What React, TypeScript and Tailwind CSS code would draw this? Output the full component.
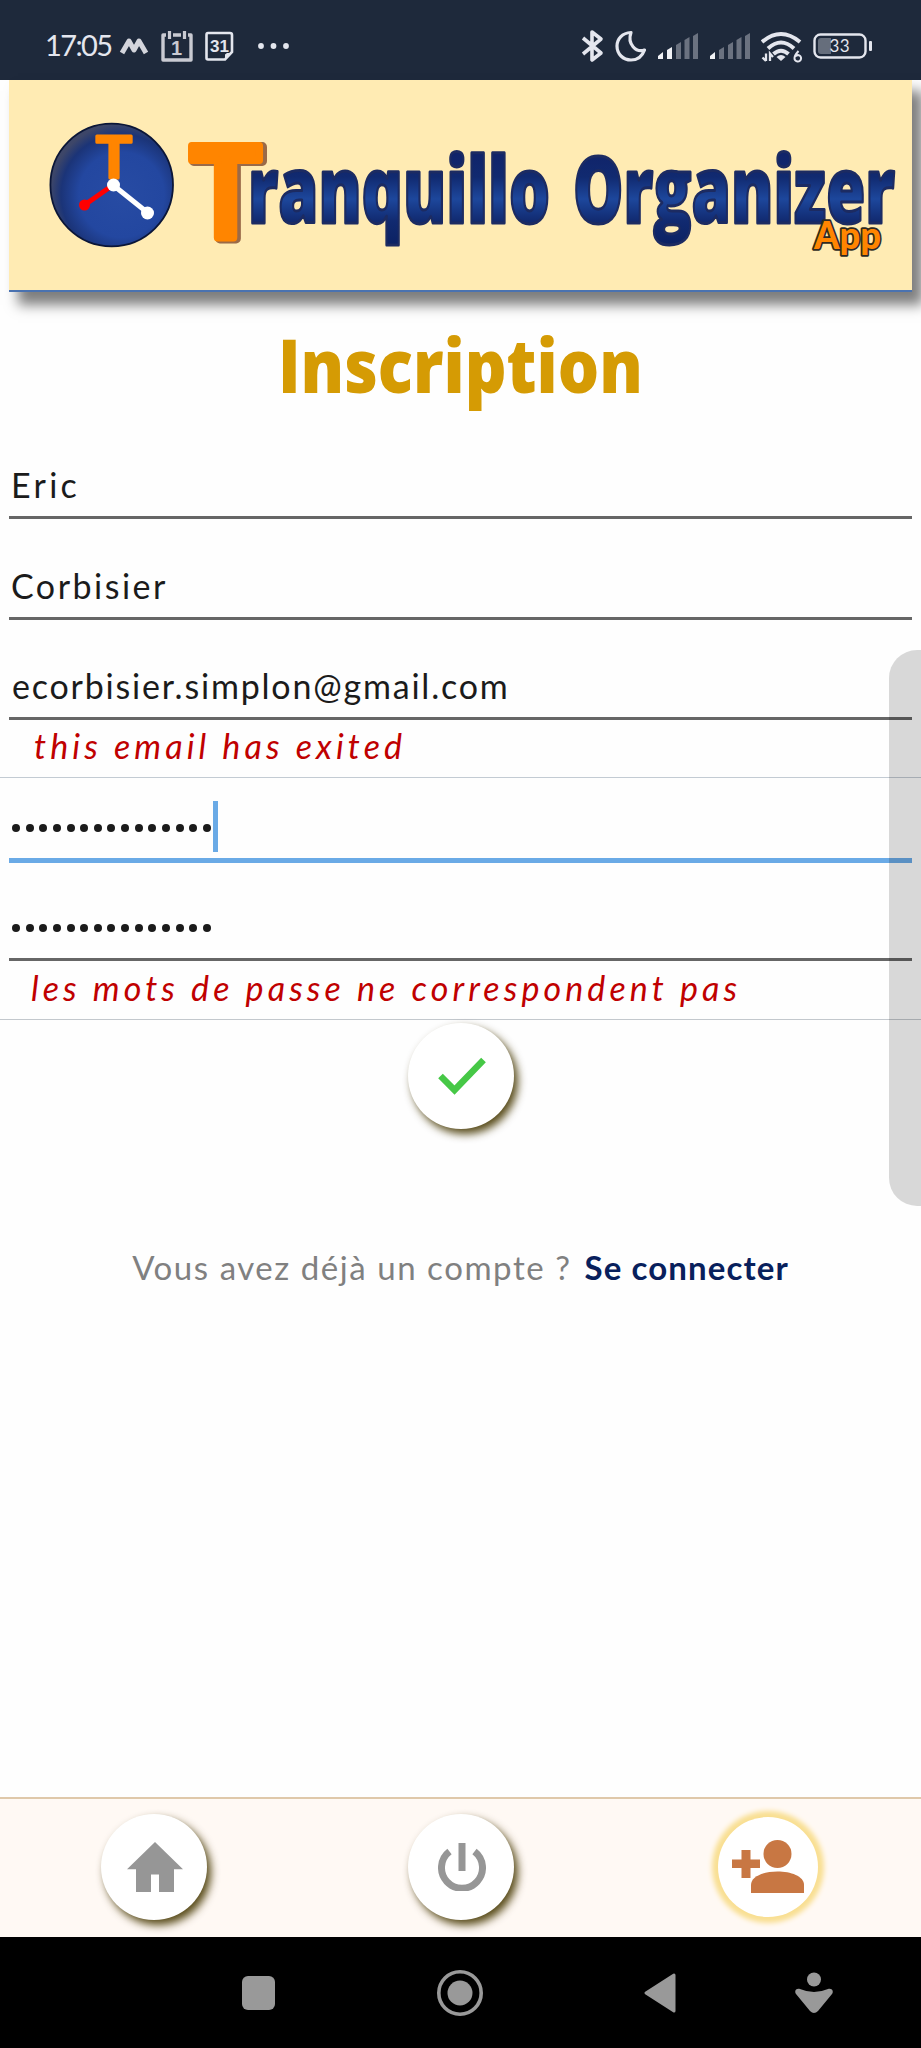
import React from "react";

function StatusBar() {
  return (
    <header className="flex h-[80px] shrink-0 items-start bg-[#1e293b] text-[#e4e6ee]">
      <span className="ml-[45px] mt-[30px] w-[70px] whitespace-nowrap text-[29px] font-normal leading-none tracking-[-1.6px]">17:05</span>
      <svg className="ml-[4px] mt-[36px]" width="30" height="20" viewBox="0 0 30 20" fill="none" stroke="#d4d5dc" strokeWidth="5" strokeLinejoin="round">
        <path d="M3 17 L10 5 L15 14 L20 5 L27 17" />
      </svg>
      <svg className="ml-[12px] mt-[30px]" width="32" height="33" viewBox="0 0 32 33">
        <path d="M5 5 H2 V30 H30 V5 H27 M12 5 H20" fill="none" stroke="#c9cad2" strokeWidth="3.400" strokeLinejoin="round" />
        <path d="M8.500 1 V9 M23.500 1 V9" stroke="#c9cad2" strokeWidth="3.200" />
        <text x="15.500" y="25" textAnchor="middle" fontSize="20" fontWeight="700" fill="#c9cad2" fontFamily="Liberation Sans, sans-serif">1</text>
      </svg>
      <svg className="ml-[12px] mt-[31px]" width="30" height="31" viewBox="0 0 30 31">
        <path d="M3 2 H25 Q27 2 27 4 V21 L20 28.500 H3 Q1.500 28.500 1.500 27 V4 Q1.500 2 3 2 Z" fill="none" stroke="#e4e6ee" strokeWidth="2.600" />
        <path d="M20 28 V23.500 L22 22 H27 Z" fill="#e4e6ee" />
        <text x="14.500" y="20.500" textAnchor="middle" fontSize="17" fontWeight="700" fill="#e4e6ee" fontFamily="Liberation Sans, sans-serif">31</text>
      </svg>
      <svg className="ml-[23px] mt-[42px]" width="32" height="8" viewBox="0 0 32 8" fill="#e4e6ee">
        <circle cx="3" cy="4" r="2.900" /><circle cx="15.500" cy="4" r="2.900" /><circle cx="28" cy="4" r="2.900" />
      </svg>
      <svg className="ml-auto mt-[29px]" width="24" height="34" viewBox="0 0 24 34" fill="none" stroke="#e4e6ee" strokeWidth="3.600" strokeLinejoin="round">
        <path d="M2 9 L20 24 L11 31 V3 L20 10 L2 25" />
      </svg>
      <svg className="ml-[10px] mt-[30px]" width="32" height="33" viewBox="0 0 32 33" fill="none" stroke="#e4e6ee" strokeWidth="3.200" strokeLinejoin="round">
        <path d="M16 2.500 C7 3 2 9 2 16 C2 24 8 30 16 30 C22 30 27 27 29.500 20 C21 23 12 14 16 2.500 Z" />
      </svg>
      <Signal strong={2} />
      <Signal strong={1} />
      <svg className="ml-[10px] mt-[31px]" width="42" height="33" viewBox="0 0 42 33" fill="none" stroke="#e4e6ee" strokeWidth="4">
        <path d="M1 11 Q20 -5 39 11" />
        <path d="M7 17.500 Q20 5.500 33 17.500" />
        <path d="M12.500 23 Q20 16.500 27.500 23" />
        <path d="M15.500 26 Q20 22 24.500 26 L20 30 Z" fill="#e4e6ee" stroke="none" />
        <path d="M5 22.500 V30 M1.500 26.500 L5 30 M9 30 V22.500 L12 26" strokeWidth="2.300" />
        <path d="M37.500 20 C34 24 33.500 26 33.500 27 A3.300 3.300 0 1 0 37 24 L34.500 25" strokeWidth="2" />
      </svg>
      <svg className="ml-[9px] mr-[47px] mt-[32px]" width="62" height="28" viewBox="0 0 62 28">
        <rect x="2.500" y="2.500" width="51" height="23" rx="6" fill="none" stroke="#e4e6ee" strokeWidth="2.400" />
        <path d="M9 6 H19 V22 H9 Q6 22 6 19 V9 Q6 6 9 6" fill="#666e7c" />
        <rect x="57" y="9" width="3" height="10" rx="1" fill="#e4e6ee" />
        <text x="27.500" y="20" textAnchor="middle" fontSize="17" textLength="20" fill="#e4e6ee" fontFamily="Lato, sans-serif">33</text>
      </svg>
    </header>
  );
}

const bars = ["M1 27 V24 L6 20 V27 Z", "M10 27 V18 L15 15 V27 Z", "M19 27 V13 L24 10 V27 Z", "M27.500 27 V8 L32.500 5 V27 Z", "M36 27 V4 L41 1 V27 Z"];

function Signal({ strong }: { strong: number }) {
  return (
    <svg className="ml-[10px] mt-[32px]" width="42" height="29" viewBox="0 0 42 29">
      {bars.map((d, i) => (
        <path key={d} d={d} fill={i < strong ? "#f1f2f6" : "#6b7280"} />
      ))}
    </svg>
  );
}

function Banner() {
  return (
    <div className="mx-[9px] h-[212px] shrink-0 border-b-2 border-[#4a72b0] bg-[#ffebb3] shadow-[10px_12px_12px_1px_rgba(0,0,0,0.5)]">
      <svg width="903" height="210" viewBox="9 80 903 210" className="block overflow-visible">
        <defs>
          <radialGradient id="disc" cx="0.58" cy="0.58" r="0.58">
            <stop offset="0" stopColor="#274ba3" />
            <stop offset="0.600" stopColor="#2347a0" />
            <stop offset="0.850" stopColor="#1b3478" />
            <stop offset="1" stopColor="#3d4668" />
          </radialGradient>
          <linearGradient id="ink" gradientUnits="userSpaceOnUse" x1="0" y1="155" x2="0" y2="243">
            <stop offset="0" stopColor="#10246a" />
            <stop offset="0.250" stopColor="#112a70" />
            <stop offset="0.500" stopColor="#1d479c" />
            <stop offset="0.750" stopColor="#112a70" />
            <stop offset="1" stopColor="#0c2264" />
          </linearGradient>
        </defs>
        <circle cx="111.700" cy="185" r="61.300" fill="url(#disc)" stroke="#0b1638" strokeWidth="1.800" />
        <text x="96" y="178" fontSize="58" fontWeight="700" textLength="36" lengthAdjust="spacingAndGlyphs" fill="#ff8500" stroke="#ff8500" strokeWidth="3" strokeLinejoin="round" fontFamily="Lato, sans-serif">T</text>
        <path d="M113 185 L84.500 205" stroke="#f00" strokeWidth="5" />
        <circle cx="84.500" cy="205" r="5.500" fill="#f00" />
        <path d="M113 185 L148 213" stroke="#fff" strokeWidth="5" />
        <circle cx="113.500" cy="185" r="6.500" fill="#fff" />
        <circle cx="147.500" cy="213" r="6.500" fill="#fff" />
        <text x="192" y="239" fontSize="126" fontWeight="700" textLength="72" lengthAdjust="spacingAndGlyphs" fill="#b5632c" stroke="#9a6a48" strokeWidth="10" strokeLinejoin="round" fontFamily="Lato, sans-serif">T</text>
        <text x="190" y="238" fontSize="126" fontWeight="700" textLength="71" lengthAdjust="spacingAndGlyphs" fill="#ff8500" stroke="#ff8500" strokeWidth="8" strokeLinejoin="round" fontFamily="Lato, sans-serif">T</text>
        <g fontFamily="Open Sans, sans-serif" fontWeight="800" fontSize="92" fill="url(#ink)" stroke="#1c2b62" strokeWidth="3" strokeLinejoin="round">
          <text x="248" y="223" textLength="302" lengthAdjust="spacingAndGlyphs">ranquillo</text>
          <text x="573" y="223" textLength="322" lengthAdjust="spacingAndGlyphs">Organizer</text>
        </g>
        <text x="814" y="249" fontSize="38" fontWeight="900" textLength="67" lengthAdjust="spacingAndGlyphs" fill="#ff8500" stroke="#2e2a22" strokeWidth="3.500" paintOrder="stroke" strokeLinejoin="round" fontFamily="Lato, sans-serif">App</text>
      </svg>
    </div>
  );
}

function Dots() {
  return (
    <span className="flex gap-[5.65px]">
      {Array.from({ length: 15 }, (_, i) => (
        <span key={i} className="size-[8px] rounded-full bg-[#1b1b1b]" />
      ))}
    </span>
  );
}

const round = "flex size-[106px] items-center justify-center rounded-full bg-white shadow-[4px_5px_8px_0px_rgba(70,55,0,0.9)]";

export default function App() {
  return (
    <div className="relative flex h-[2048px] w-[921px] flex-col overflow-hidden bg-[#fefefe] font-[Lato,sans-serif] text-[#1b1b1b]">
      <StatusBar />
      <Banner />
      <h1 className="mt-[22px] flex h-[105px] shrink-0 justify-center whitespace-nowrap font-['Open_Sans',sans-serif] text-[74px] font-extrabold leading-[101px] text-[#d59b04]">
        <span className="scale-x-[0.88]">Inscription</span>
      </h1>
      <main className="flex grow flex-col">
        <div className="mx-[9px] flex h-[100px] items-end border-b-[3px] border-[#666] pb-[14px] pl-[2px] text-[34px] leading-none tracking-[3.3px]">Eric</div>
        <div className="mx-[9px] flex h-[101px] items-end border-b-[3px] border-[#666] pb-[14px] pl-[2px] text-[34px] leading-none tracking-[2.5px]">Corbisier</div>
        <div className="mx-[9px] flex h-[100px] items-end border-b-[3px] border-[#666] pb-[14px] pl-[3px] text-[34px] leading-none tracking-[1.8px]">ecorbisier.simplon@gmail.com</div>
        <div className="h-[58px] border-b border-[#c3cbd3] pl-[34px] pt-[9px] text-[34px] italic leading-none tracking-[4.1px] text-[#c00000]">this email has exited</div>
        <div className="mx-[9px] flex h-[85px] border-b-[5px] border-[#6aaae6] pl-[3px]">
          <div className="mt-[46px]"><Dots /></div>
          <div className="ml-[2px] mt-[23px] h-[51px] w-[5px] bg-[#6aaae6]" />
        </div>
        <div className="mx-[9px] h-[98px] border-b-[3px] border-[#666] pl-[3px] pt-[61px]"><Dots /></div>
        <div className="h-[59px] border-b border-[#c3c8cd] pl-[31px] pt-[10px] text-[34px] italic leading-none tracking-[4.1px] text-[#c00000]">les mots de passe ne correspondent pas</div>
        <button className={`${round} mx-auto mt-[3px]`}>
          <svg className="ml-[2px]" width="48" height="38" viewBox="0 0 48 38" fill="none" stroke="#46c846" strokeWidth="6.500"><path d="M2.500 19 L16.500 33 L45.500 3" /></svg>
        </button>
        <p className="mt-[122px] flex justify-center whitespace-nowrap text-[33px] leading-none text-[#808080]">
          <span className="tracking-[1.55px]">Vous avez déjà un compte ?</span>
          <span className="ml-[13px] font-bold tracking-[1.1px] text-[#08205c]">Se connecter</span>
        </p>
      </main>
      <nav className="grid h-[140px] shrink-0 grid-cols-3 justify-items-center border-t-2 border-[#dfc8aa] bg-[#fff9f4] pt-[15px]">
        <button className={round}>
          <svg className="ml-[3px]" width="56" height="50" viewBox="0 0 56 46" preserveAspectRatio="none" fill="#969696"><path d="M28 0 L56 25 H47 V46 H32 V30 H24 V46 H9 V25 H0 Z" /></svg>
        </button>
        <button className={round}>
          <svg className="ml-[3px]" width="48" height="48" viewBox="0 0 48 48" fill="none" stroke="#969696" strokeWidth="7"><path d="M24 0 V28 M11.500 8.500 A20.500 20.500 0 1 0 36.500 8.500" /></svg>
        </button>
        <button className="mt-[3px] flex size-[100px] items-center justify-center rounded-full bg-white shadow-[0_0_5px_6px_#f9df92]">
          <svg width="72" height="54" viewBox="0 0 72 54" fill="#c87743"><path d="M9.500 10 H18.500 V19.500 H28 V28 H18.500 V38 H9.500 V28 H0 V19.500 H9.500 Z" /><circle cx="45.500" cy="14" r="14" /><path d="M19 53 V45 C19 27 72 27 72 45 V53 Z" /></svg>
        </button>
      </nav>
      <footer className="flex h-[111px] shrink-0 items-center bg-black">
        <svg className="ml-[242px]" width="33" height="34"><rect width="33" height="34" rx="6" fill="#999" /></svg>
        <svg className="ml-[161px]" width="48" height="48" viewBox="0 0 48 48"><circle cx="24" cy="24" r="21.200" fill="none" stroke="#999" strokeWidth="3.600" /><circle cx="24" cy="24" r="12.500" fill="#999" /></svg>
        <svg className="ml-[160px]" width="33" height="40" viewBox="0 0 33 40"><path d="M2 20 L30 2 V38 Z" fill="#999" stroke="#999" strokeWidth="3" strokeLinejoin="round" /></svg>
        <svg className="ml-[118px]" width="38" height="42" viewBox="0 0 38 42" fill="#999"><circle cx="19" cy="7.500" r="7" /><path d="M5 17 Q19 23 33 17 C37 16 39 19 37 22 L23 39 Q19 43 15 39 L1 22 C-1 19 1 16 5 17 Z" /></svg>
      </footer>
      <div className="absolute right-0 top-[650px] h-[556px] w-[32px] rounded-l-[28px] bg-black/15" />
    </div>
  );
}
